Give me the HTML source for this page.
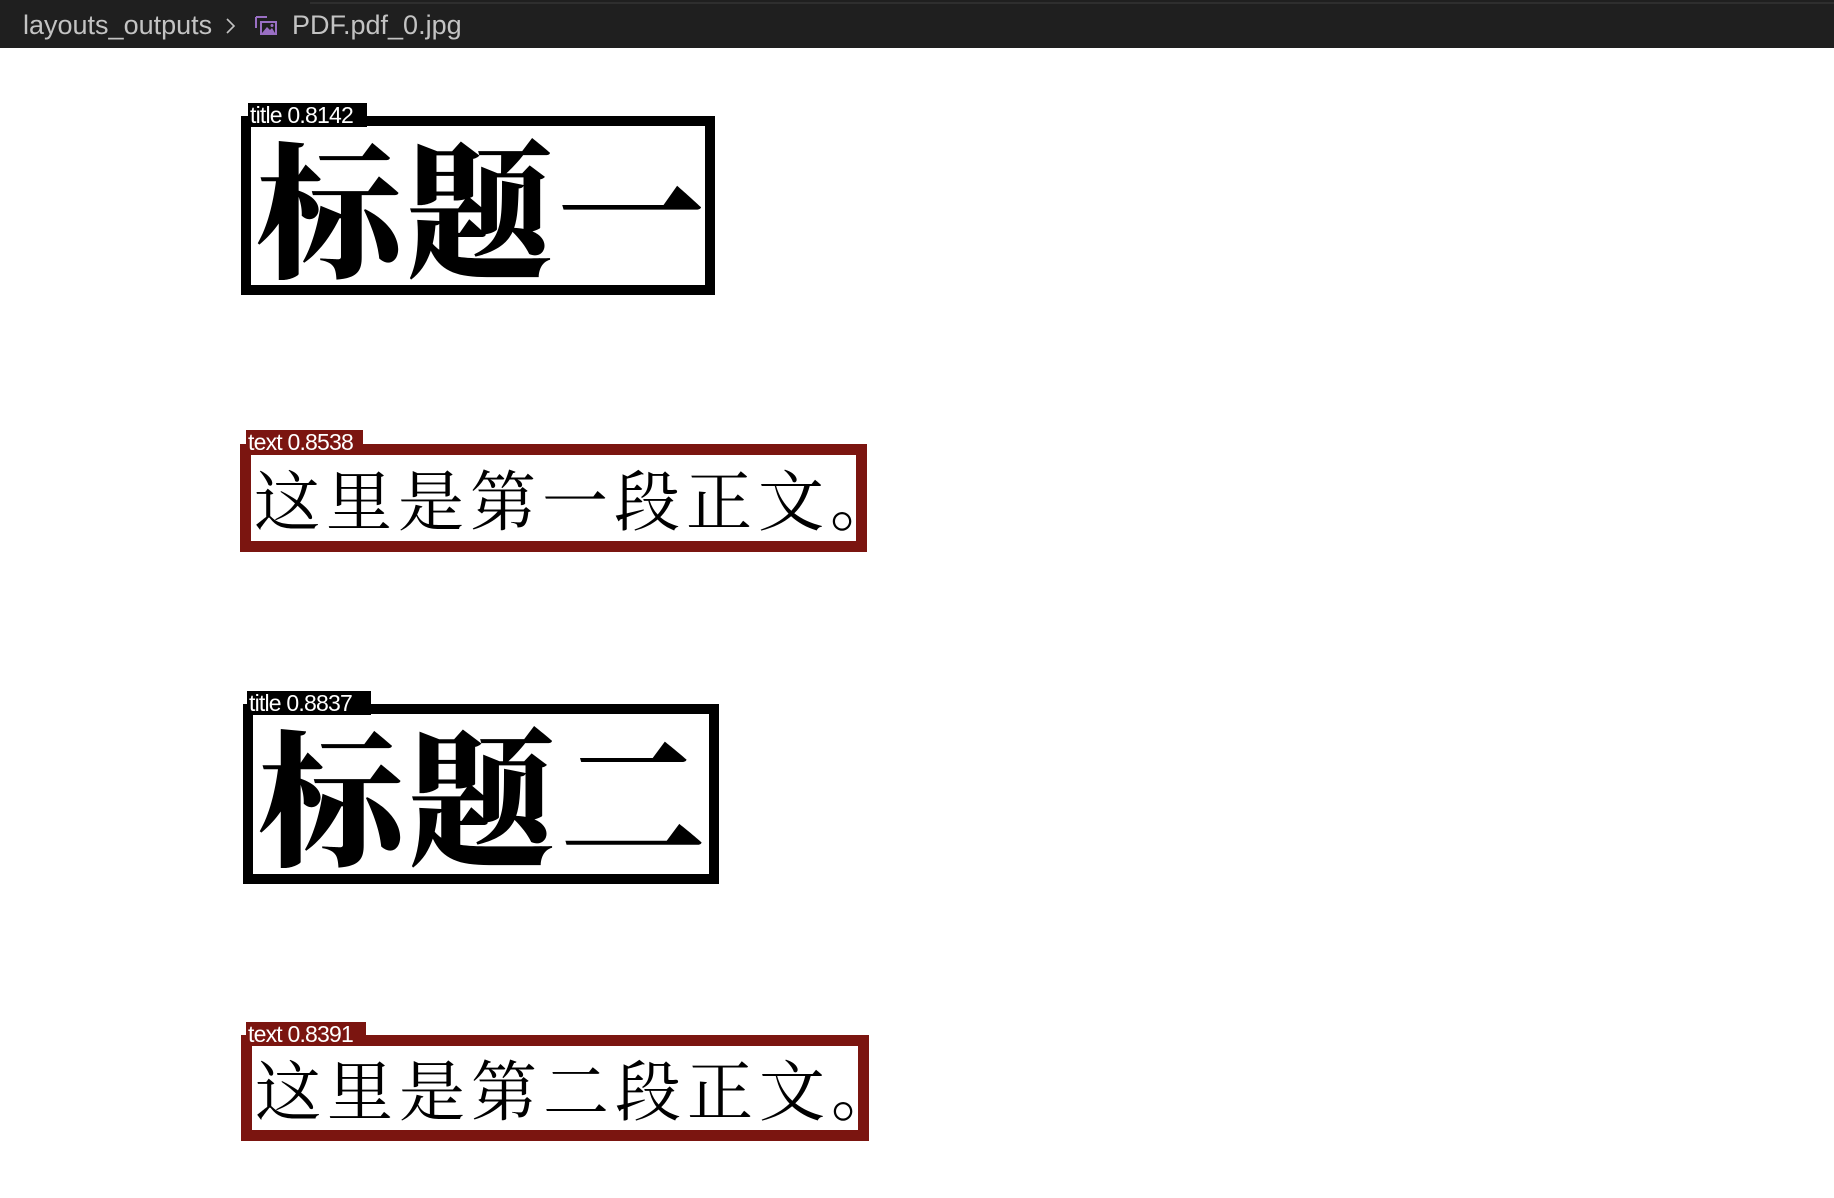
<!DOCTYPE html>
<html><head><meta charset="utf-8"><style>
html,body{margin:0;padding:0;width:1834px;height:1198px;background:#fff;overflow:hidden;position:relative;font-family:"Liberation Sans",sans-serif}
.bar{position:absolute;left:0;top:0;width:1834px;height:48px;background:#1f1f1f}
.bar .t{position:absolute;top:10px;font-size:27px;color:#c3c3c3;white-space:nowrap}
.box{position:absolute;box-sizing:border-box;border:10px solid #000;background:#fff}
.red{border-color:#7b1510;border-width:11px}
.lab{position:absolute;color:#fff;font-size:23px;line-height:24px;height:24px;padding-left:2px;box-sizing:border-box;white-space:nowrap;letter-spacing:-0.8px;overflow:hidden}
.tt{position:absolute;font-family:"Noto Serif CJK SC","Noto Sans CJK SC",serif;font-weight:900;font-size:146px;line-height:146px;white-space:nowrap;color:#000;letter-spacing:5px}
.tx{position:absolute;font-family:"Noto Serif CJK SC",serif;font-weight:400;font-size:66px;line-height:66px;white-space:nowrap;color:#000;letter-spacing:6px}
</style></head><body>
<div class="bar">
<div style="position:absolute;left:310px;top:2px;width:1524px;height:2px;background:#2e2e2e"></div>
<span class="t" style="left:23px">layouts_outputs</span>
<svg style="position:absolute;left:225px;top:16px" width="12" height="20" viewBox="0 0 12 20"><path d="M2 3 L9 10 L2 17" fill="none" stroke="#c3c3c3" stroke-width="1.6"/></svg>
<svg style="position:absolute;left:255px;top:16px" width="23" height="20" viewBox="0 0 23 20"><path d="M1 1 H12 M1 1 V12" stroke="#9a6fc4" stroke-width="2" fill="none"/><rect x="5" y="5" width="17" height="14" fill="#9a6fc4"/><rect x="7" y="7" width="13" height="10" fill="#1f1f1f"/><path d="M7 17 L12 11 L15 14 L17 12 L20 17 Z" fill="#9a6fc4"/><circle cx="17" cy="9.5" r="1.5" fill="#9a6fc4"/></svg>
<span class="t" style="left:292px">PDF.pdf_0.jpg</span>
</div>

<div class="box" style="left:241px;top:116px;width:474px;height:179px"></div>
<div class="lab" style="left:248px;top:103px;width:119px;background:#000">title 0.8142</div>
<div class="tt" style="left:256px;top:130px">标题一</div>

<div class="box red" style="left:240px;top:444px;width:627px;height:108px"></div>
<div class="lab" style="left:246px;top:430px;width:117px;background:#7b1510">text 0.8538</div>
<div class="tx" style="left:254px;top:464px">这里是第一段正文。</div>

<div class="box" style="left:243px;top:704px;width:476px;height:180px"></div>
<div class="lab" style="left:247px;top:691px;width:124px;background:#000">title 0.8837</div>
<div class="tt" style="left:258px;top:718px">标题二</div>

<div class="box red" style="left:241px;top:1035px;width:628px;height:106px"></div>
<div class="lab" style="left:246px;top:1022px;width:120px;background:#7b1510">text 0.8391</div>
<div class="tx" style="left:255px;top:1054px">这里是第二段正文。</div>
</body></html>
